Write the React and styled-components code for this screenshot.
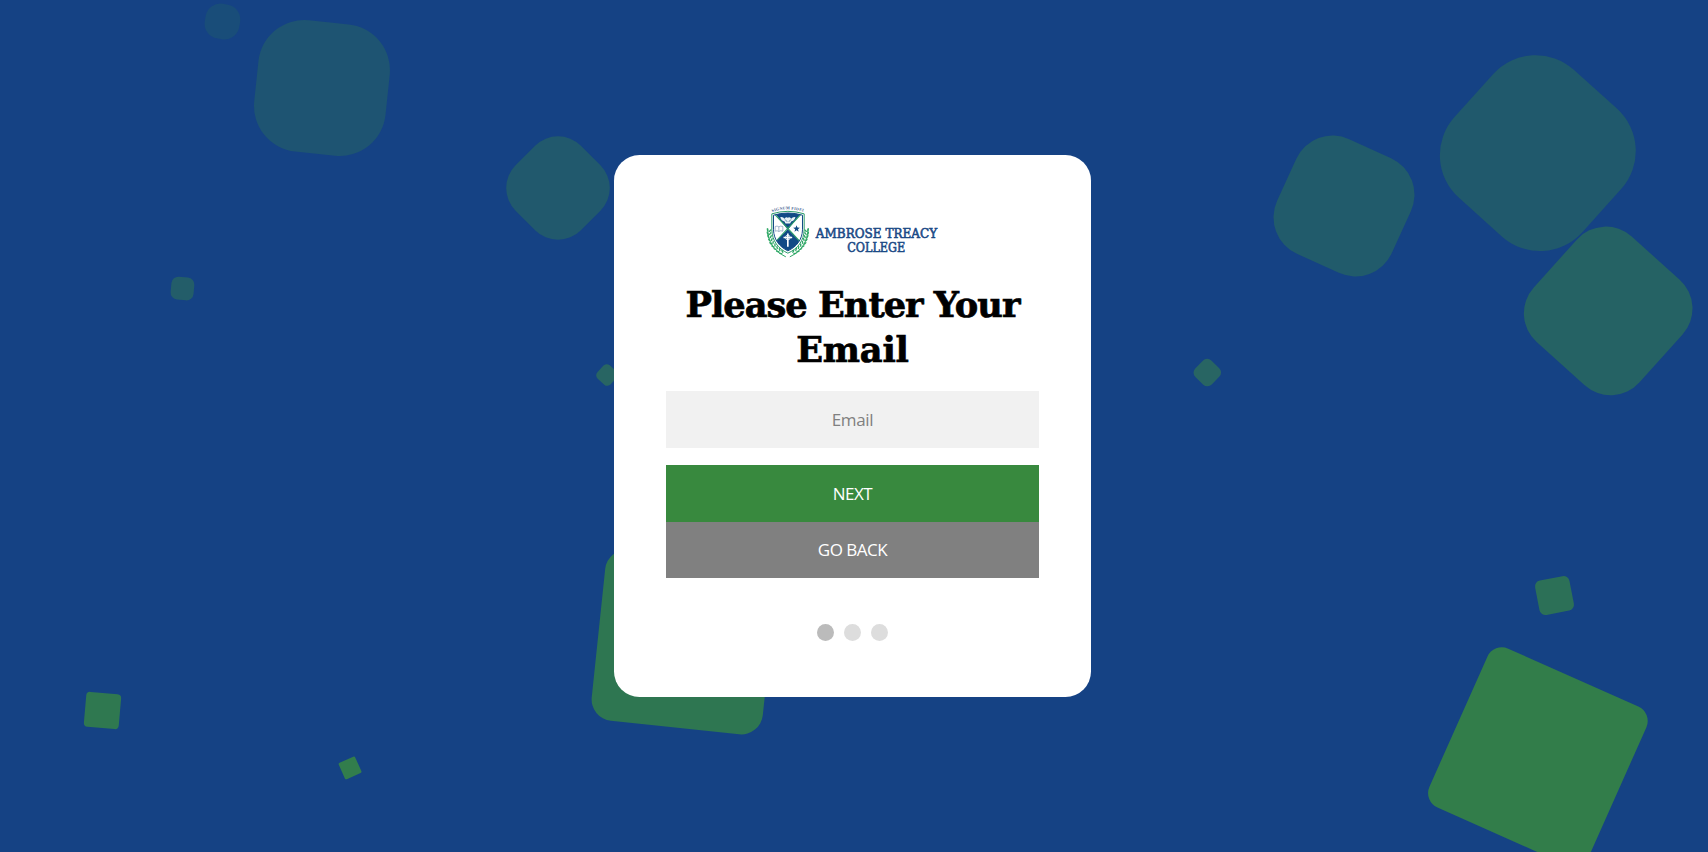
import React from "react";
import styled, { createGlobalStyle } from "styled-components";

const GlobalStyle = createGlobalStyle`
  *, *::before, *::after { box-sizing: border-box; }
  body { margin: 0; background: #154284; font-family: "Open Sans", "Noto Sans", sans-serif; }
`;

const Page = styled.main`
  position: relative;
  height: 852px;
  overflow: hidden;
  display: flex;
  flex-direction: column;
  align-items: center;
  padding-top: 154.8px;
  background: #154284;
`;

const Tile = styled.span`
  position: absolute;
  left: ${(p) => p.$x - p.$size / 2}px;
  top: ${(p) => p.$y - p.$size / 2}px;
  width: ${(p) => p.$size}px;
  height: ${(p) => p.$size}px;
  border-radius: ${(p) => p.$radius}px;
  transform: rotate(${(p) => p.$turn}deg);
  background: ${(p) => p.$color};
`;

const Card = styled.form`
  position: relative;
  width: 476.4px;
  height: 541.9px;
  margin-right: 3px;
  padding: 49px 52px 0;
  display: flex;
  flex-direction: column;
  align-items: center;
  border-radius: 25.5px;
  background: #fff;
`;

const LogoArt = styled.svg`
  display: block;
  flex: none;
  width: 180px;
  height: 57px;
  overflow: visible;
`;

const Title = styled.h1`
  width: 100%;
  margin: 21.4px 0 0;
  font-family: "DejaVu Serif", serif;
  font-size: 35.2px;
  font-weight: 700;
  line-height: 45px;
  text-align: center;
  white-space: nowrap;
  color: #000;
  -webkit-text-stroke: 0.7px #000;
`;

const TitleLine = styled.span`
  display: block;
  letter-spacing: ${(p) => p.$spacing}px;
`;

const Field = styled.input`
  flex: none;
  width: 100%;
  height: 56.6px;
  margin: 19.2px 0 17.2px;
  padding: 0;
  border: 0;
  background: #f1f1f1;
  font: 400 17px "Open Sans", sans-serif;
  letter-spacing: -0.35px;
  text-align: center;
  &::placeholder { color: #808080; opacity: 1; }
`;

const Action = styled.button`
  flex: none;
  width: 100%;
  height: 56.4px;
  padding: 0;
  border: 0;
  background: ${(p) => p.$color};
  color: #fff;
  font: 400 17px "Open Sans", sans-serif;
  letter-spacing: -0.5px;
  text-transform: uppercase;
`;

const Steps = styled.div`
  display: flex;
  gap: 9.6px;
  margin-top: 46px;
`;

const Step = styled.span`
  width: 17.2px;
  height: 17.2px;
  border-radius: 50%;
  background: ${(p) => (p.$active ? "#bbb" : "#ddd")};
`;

const tiles = [
  { x: 222.1, y: 21.4, size: 34.6, radius: 15, turn: 10, color: "#194d79" },
  { x: 322.2, y: 88, size: 131.7, radius: 46, turn: 6, color: "#1e5472" },
  { x: 558.3, y: 187.5, size: 92, radius: 32, turn: 45, color: "#21596d" },
  { x: 182.3, y: 288, size: 22.6, radius: 7, turn: 5, color: "#235d69" },
  { x: 606.5, y: 375.3, size: 18, radius: 4.6, turn: 42, color: "#286563" },
  { x: 1343.7, y: 206, size: 126, radius: 40, turn: 24.5, color: "#215b6b" },
  { x: 1537.5, y: 152.7, size: 171.6, radius: 57, turn: 42, color: "#20596c" },
  { x: 1608.6, y: 311.3, size: 142.4, radius: 38.7, turn: 42, color: "#256264" },
  { x: 1207.3, y: 372.7, size: 22.6, radius: 6, turn: 44, color: "#286563" },
  { x: 1554.5, y: 595.7, size: 35.2, radius: 6, turn: -11, color: "#2c7057" },
  { x: 683.5, y: 642, size: 172, radius: 21.5, turn: 6, color: "#2e7651" },
  { x: 102.5, y: 710.5, size: 35, radius: 4, turn: 5, color: "#2f7850" },
  { x: 350, y: 767.3, size: 17.6, radius: 1.5, turn: -24, color: "#327d4c" },
  { x: 1537.8, y: 756.3, size: 173.6, radius: 15.8, turn: 24, color: "#327d4a" },
];

/* Leaf positions down the left branch of the laurel: x, y, rotation */
const leaves = [
  [504, 268, 12], [504, 278, 4], [506, 288, -6], [509, 298, -15], [513, 308, -25],
  [519, 317, -34], [526, 325, -42], [534, 332, -50], [543, 338, -58],
];

const Laurel = () => (
  <g>
    <path d="M504 264C503 300 522 332 558 349" fill="none" stroke="#2fa866" strokeWidth="3" />
    {leaves.map(([x, y, r]) => (
      <g key={y} transform={`translate(${x} ${y}) rotate(${r})`} fill="#2fa866">
        <ellipse cx="-1" cy="0" rx="2.2" ry="5.5" transform="rotate(-22)" />
        <ellipse cx="7" cy="1" rx="2.2" ry="5.5" transform="rotate(32 7 1)" />
      </g>
    ))}
  </g>
);

const Logo = () => (
  <LogoArt viewBox="486.500 190.500 540 171" role="img" aria-label="Ambrose Treacy College">
    <defs>
      <path id="motto" d="M515 215Q564 198 616 215" />
      <clipPath id="shield">
        <path d="M521 224Q564 211 608 224V268C607 298 590 319 564 331C539 319 522 298 521 268Z" />
      </clipPath>
    </defs>
    <text fill="#44618f" fontFamily="Liberation Serif" fontWeight="700" fontSize="12">
      <textPath href="#motto" textLength="95" startOffset="2">SIGNUM FIDEI</textPath>
    </text>
    <path d="M516 220Q564 205 613 220V268C612 301 594 325 564 338C535 325 517 301 516 268Z" fill="#fff" stroke="#2c9c6b" strokeWidth="3" />
    <g clipPath="url(#shield)">
      <path d="M515 205H614L564 268ZM564 266L610 312L564 345L518 312Z" fill="#124a86" />
      <path d="M518 214L614 318M610 214L514 318" stroke="#2c9c6b" strokeWidth="3.5" />
    </g>
    <path d="M521 224Q564 211 608 224V268C607 298 590 319 564 331C539 319 522 298 521 268Z" fill="none" stroke="#124a86" strokeWidth="3" />
    <path d="M541 230Q550 228 554 235Q559 228 564 232Q569 228 574 235Q579 228 587 230Q583 241 574 243L571 249H557L554 243Q545 241 541 230Z" fill="#e9f3f5" />
    <path d="M556 237L562 244M573 237L567 244" stroke="#124a86" strokeWidth="2" />
    <path d="M526 258Q532 255 537 259Q542 255 549 258V272Q542 269 537 273Q532 269 526 272ZM537 259V273" fill="#fff" stroke="#6b8bae" strokeWidth="1.8" />
    <path d="M590 254L592.800 261L600 261.500L594.500 266L596.500 273.500L590 269L584 273.500L586 266L580 261.500L587.500 261Z" fill="#124a86" />
    <path d="M564 279V319M551 291H577" stroke="#fff" strokeWidth="5" />
    <circle cx="564" cy="291" r="7" fill="none" stroke="#fff" strokeWidth="2.5" />
    <Laurel />
    <g transform="translate(1128 0) scale(-1 1)"><Laurel /></g>
    <g fill="#1b4a86" stroke="#1b4a86" strokeWidth="1.8" fontFamily="DejaVu Serif" fontSize="39">
      <text x="648" y="292" textLength="364" lengthAdjust="spacingAndGlyphs">AMBROSE TREACY</text>
      <text x="742" y="335" textLength="174" lengthAdjust="spacingAndGlyphs">COLLEGE</text>
    </g>
  </LogoArt>
);

export default function App() {
  return (
    <>
      <GlobalStyle />
      <Page>
        {tiles.map((t) => (
          <Tile key={`${t.x}-${t.y}`} $x={t.x} $y={t.y} $size={t.size} $radius={t.radius} $turn={t.turn} $color={t.color} />
        ))}
        <Card onSubmit={(e) => e.preventDefault()}>
          <Logo />
          <Title>
            <TitleLine $spacing={-1}>Please Enter Your </TitleLine>
            <TitleLine $spacing={-0.2}>Email</TitleLine>
          </Title>
          <Field type="email" placeholder="Email" />
          <Action type="submit" $color="#38893e">Next</Action>
          <Action type="button" $color="#808080">Go Back</Action>
          <Steps>
            <Step $active />
            <Step />
            <Step />
          </Steps>
        </Card>
      </Page>
    </>
  );
}
